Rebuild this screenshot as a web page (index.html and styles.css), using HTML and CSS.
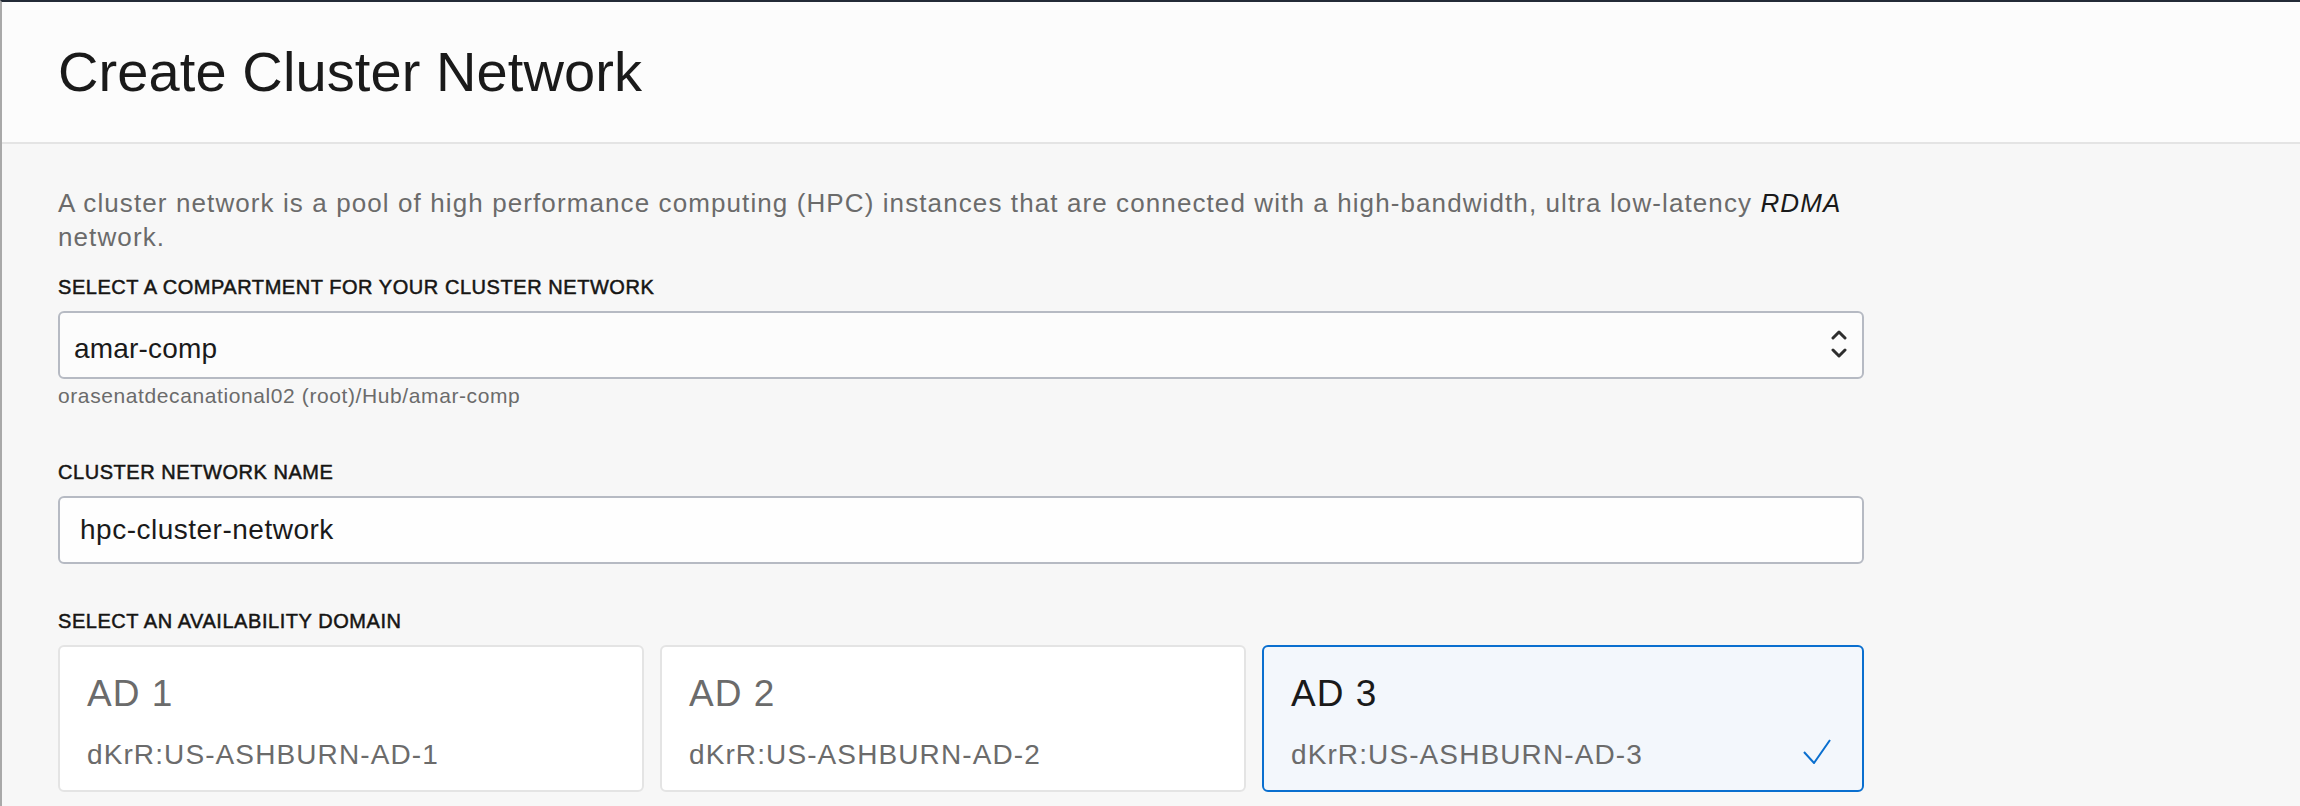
FILE: index.html
```html
<!DOCTYPE html>
<html lang="en">
<head>
<meta charset="utf-8">
<title>Create Cluster Network</title>
<link rel="stylesheet" href="styles.css">
</head>
<body>
<div class="page">
  <header class="page-header">
    <h1 class="title">Create Cluster Network</h1>
  </header>
  <main class="content">
    <div class="form">
      <p class="intro">A cluster network is a pool of high performance computing (HPC) instances that are connected with a high-bandwidth, ultra low-latency <em>RDMA</em> network.</p>

      <div class="field">
        <label class="field-label">SELECT A COMPARTMENT FOR YOUR CLUSTER NETWORK</label>
        <div class="select-box">
          <span class="select-value">amar-comp</span>
          <svg class="select-arrows" width="16" height="28" viewBox="0 0 16 28" aria-hidden="true">
            <polyline points="2,8 8,2 14,8" fill="none" stroke="#2e2e2e" stroke-width="3" stroke-linecap="round" stroke-linejoin="round"/>
            <polyline points="2,20 8,26 14,20" fill="none" stroke="#2e2e2e" stroke-width="3" stroke-linecap="round" stroke-linejoin="round"/>
          </svg>
        </div>
        <div class="field-hint">orasenatdecanational02 (root)/Hub/amar-comp</div>
      </div>

      <div class="field field-name">
        <label class="field-label">CLUSTER NETWORK NAME</label>
        <div class="text-input">hpc-cluster-network</div>
      </div>

      <div class="field field-ad">
        <label class="field-label">SELECT AN AVAILABILITY DOMAIN</label>
        <div class="ad-grid">
          <div class="ad-card">
            <div class="ad-title">AD 1</div>
            <div class="ad-row"><span class="ad-name">dKrR:US-ASHBURN-AD-1</span></div>
          </div>
          <div class="ad-card">
            <div class="ad-title">AD 2</div>
            <div class="ad-row"><span class="ad-name">dKrR:US-ASHBURN-AD-2</span></div>
          </div>
          <div class="ad-card is-selected">
            <div class="ad-title">AD 3</div>
            <div class="ad-row">
              <span class="ad-name">dKrR:US-ASHBURN-AD-3</span>
              <svg class="ad-check" width="28" height="25" viewBox="0 0 28 25" aria-hidden="true">
                <polyline points="1,13 11,24 27,1" fill="none" stroke="#0a6fcf" stroke-width="2"/>
              </svg>
            </div>
          </div>
        </div>
      </div>
    </div>
  </main>
</div>
</body>
</html>
```

FILE: styles.css
```css
* { box-sizing: border-box; }

html, body {
  margin: 0;
  padding: 0;
  height: 100%;
  overflow: hidden;
}

body {
  background: #f7f7f7;
  font-family: "Liberation Sans", Arial, Helvetica, sans-serif;
  color: #161513;
}

.page {
  min-height: 100vh;
  border-top: 2px solid #232b37;
  border-left: 2px solid #a9a9a9;
  background: #f7f7f7;
}

.page-header {
  height: 142px;
  background: #fcfcfc;
  border-bottom: 2px solid #e4e4e4;
  display: flex;
  align-items: center;
  padding-left: 56px;
}

.title {
  margin: 0;
  font-size: 56px;
  line-height: 56px;
  font-weight: 400;
  color: #1a1a1a;
  letter-spacing: 0.1px;
}

.content {
  padding: 43px 0 0 56px;
}

.form {
  width: 1806px;
}

.intro {
  margin: 0 0 21px 0;
  font-size: 26px;
  line-height: 33.5px;
  color: #6b6b6b;
  letter-spacing: 1.1px;
}

.intro em {
  color: #1a1a1a;
}

.field {
  display: flex;
  flex-direction: column;
}

.field-label {
  font-size: 20px;
  line-height: 24px;
  color: #161513;
  margin-bottom: 12px;
  letter-spacing: 0.55px;
  -webkit-text-stroke: 0.5px #161513;
}

.select-box {
  height: 68px;
  border: 2px solid #b6bac3;
  border-radius: 6px;
  background: #fcfcfc;
  display: flex;
  align-items: center;
  justify-content: space-between;
  padding: 7px 15px 0 14px;
}

.select-value {
  font-size: 28px;
  line-height: 28px;
  color: #1a1a1a;
  letter-spacing: 0.2px;
}

.select-arrows {
  align-self: center;
  margin-top: -10px;
}

.field-hint {
  margin-top: 5px;
  font-size: 21px;
  line-height: 24px;
  color: #6b6b6b;
  letter-spacing: 0.6px;
}

.field-name {
  margin-top: 52px;
}

.text-input {
  height: 68px;
  border: 2px solid #b6bac3;
  border-radius: 6px;
  background: #fefefe;
  display: flex;
  align-items: center;
  padding: 0 20px;
  font-size: 28px;
  line-height: 28px;
  color: #1a1a1a;
  letter-spacing: 0.5px;
}

.field-ad {
  margin-top: 45px;
}

.ad-grid {
  display: grid;
  grid-template-columns: 586px 586px 1fr;
  gap: 16px;
}

.ad-card {
  height: 147px;
  background: #ffffff;
  border: 2px solid #e4e4e4;
  border-radius: 6px;
  padding: 29px 31px 0 27px;
}

.ad-card.is-selected {
  background: #f3f7fc;
  border-color: #0a6fcf;
}

.ad-title {
  font-size: 37px;
  line-height: 36px;
  color: #6b6b6b;
  letter-spacing: 1px;
}

.is-selected .ad-title {
  color: #1a1a1a;
}

.ad-row {
  margin-top: 29px;
  display: flex;
  align-items: center;
  justify-content: space-between;
  height: 28px;
}

.ad-name {
  font-size: 28px;
  line-height: 28px;
  color: #6b6b6b;
  letter-spacing: 1.1px;
}

.ad-check {
  margin-top: -8px;
}
```
